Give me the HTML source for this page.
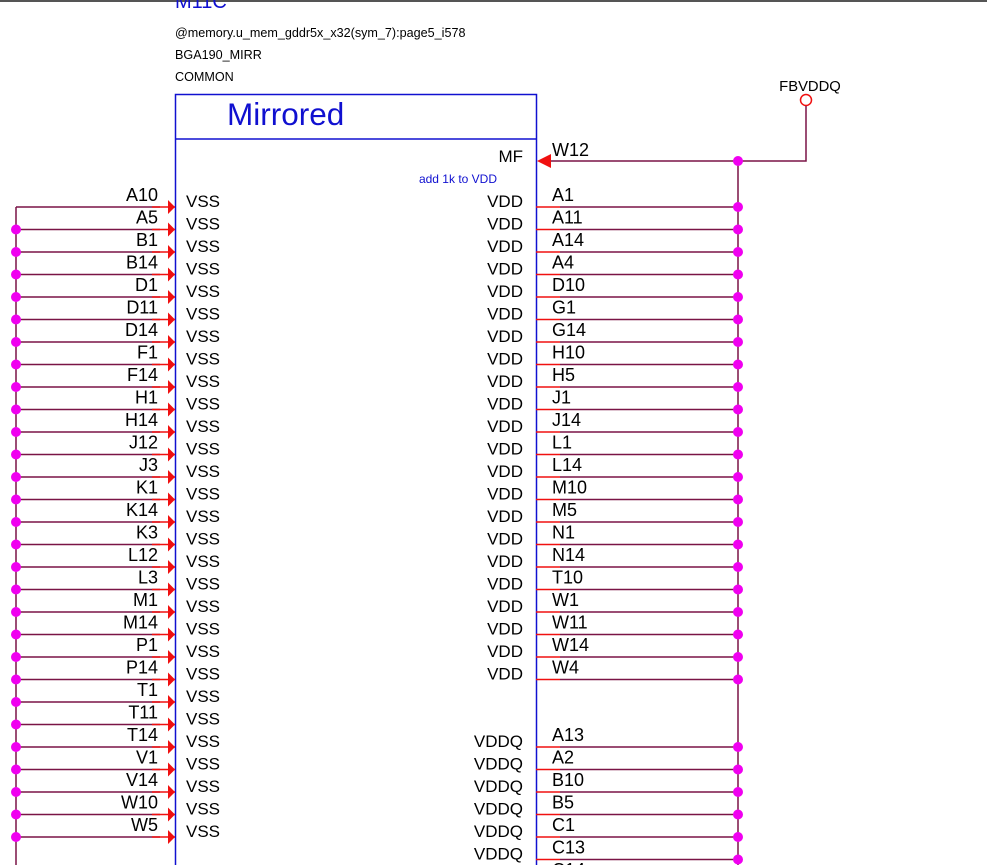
<!DOCTYPE html>
<html><head><meta charset="utf-8"><style>
html,body{margin:0;padding:0;background:#fff;width:987px;height:865px;overflow:hidden}
svg{display:block}
text{font-family:"Liberation Sans",sans-serif}
.l{font-size:18px;fill:#000;text-anchor:end}
.r{font-size:18px;fill:#000}
.v{font-size:17px;fill:#000}
.vr{font-size:17px;fill:#000;text-anchor:end}
.w{stroke:#7a1446;stroke-width:1.5;fill:none}
.red{stroke:#f01010;stroke-width:1.5}
.d{fill:#f000f0}
.a{fill:#f01010}
</style></head><body>
<svg width="987" height="865" viewBox="0 0 987 865">
<rect x="0" y="0" width="987" height="2" fill="#555"/>
<text x="175" y="8" font-size="20" fill="#1010d0">M11C</text>
<text x="175" y="37" font-size="12.6">@memory.u_mem_gddr5x_x32(sym_7):page5_i578</text>
<text x="175" y="59" font-size="12.6">BGA190_MIRR</text>
<text x="175" y="81" font-size="12.6">COMMON</text>
<rect x="175.5" y="94.5" width="361" height="790" fill="none" stroke="#1010d0" stroke-width="1.5"/>
<line x1="175" y1="139" x2="536" y2="139" stroke="#1010d0" stroke-width="1.5"/>
<text x="227" y="125" font-size="31.5" fill="#1010d0">Mirrored</text>
<text x="523" y="162" class="vr">MF</text>
<text x="497" y="183" font-size="12" fill="#1010d0" text-anchor="end">add 1k to VDD</text>
<text x="810" y="91" font-size="14.8" text-anchor="middle">FBVDDQ</text>
<circle cx="806" cy="100" r="5.5" fill="#fff" stroke="#f01010" stroke-width="1.5"/>
<polyline class="w" points="806,106 806,161 550,161"/>
<polygon class="a" points="537,161 551,154 551,168"/>
<text x="552" y="156" class="r">W12</text>
<line class="w" x1="738" y1="161" x2="738" y2="865"/>
<circle class="d" cx="738" cy="161" r="5"/>
<line class="w" x1="16" y1="207" x2="16" y2="865"/>

<g id="L">
<path class="w" d="M16 207H160M16 229.5H160M16 252H160M16 274.5H160M16 297H160M16 319.5H160M16 342H160M16 364.5H160M16 387H160M16 409.5H160M16 432H160M16 454.5H160M16 477H160M16 499.5H160M16 522H160M16 544.5H160M16 567H160M16 589.5H160M16 612H160M16 634.5H160M16 657H160M16 679.5H160M16 702H160M16 724.5H160M16 747H160M16 769.5H160M16 792H160M16 814.5H160M16 837H160"/>
<path class="red" d="M152 207H175M152 229.5H175M152 252H175M152 274.5H175M152 297H175M152 319.5H175M152 342H175M152 364.5H175M152 387H175M152 409.5H175M152 432H175M152 454.5H175M152 477H175M152 499.5H175M152 522H175M152 544.5H175M152 567H175M152 589.5H175M152 612H175M152 634.5H175M152 657H175M152 679.5H175M152 702H175M152 724.5H175M152 747H175M152 769.5H175M152 792H175M152 814.5H175M152 837H175"/>
<path class="a" d="M168 200l7 7-7 7zM168 222.5l7 7-7 7zM168 245l7 7-7 7zM168 267.5l7 7-7 7zM168 290l7 7-7 7zM168 312.5l7 7-7 7zM168 335l7 7-7 7zM168 357.5l7 7-7 7zM168 380l7 7-7 7zM168 402.5l7 7-7 7zM168 425l7 7-7 7zM168 447.5l7 7-7 7zM168 470l7 7-7 7zM168 492.5l7 7-7 7zM168 515l7 7-7 7zM168 537.5l7 7-7 7zM168 560l7 7-7 7zM168 582.5l7 7-7 7zM168 605l7 7-7 7zM168 627.5l7 7-7 7zM168 650l7 7-7 7zM168 672.5l7 7-7 7zM168 695l7 7-7 7zM168 717.5l7 7-7 7zM168 740l7 7-7 7zM168 762.5l7 7-7 7zM168 785l7 7-7 7zM168 807.5l7 7-7 7zM168 830l7 7-7 7z"/>
<g class="d">
<circle cx="16" cy="229.5" r="5"/><circle cx="16" cy="252" r="5"/><circle cx="16" cy="274.5" r="5"/><circle cx="16" cy="297" r="5"/><circle cx="16" cy="319.5" r="5"/><circle cx="16" cy="342" r="5"/><circle cx="16" cy="364.5" r="5"/><circle cx="16" cy="387" r="5"/><circle cx="16" cy="409.5" r="5"/><circle cx="16" cy="432" r="5"/><circle cx="16" cy="454.5" r="5"/><circle cx="16" cy="477" r="5"/><circle cx="16" cy="499.5" r="5"/><circle cx="16" cy="522" r="5"/><circle cx="16" cy="544.5" r="5"/><circle cx="16" cy="567" r="5"/><circle cx="16" cy="589.5" r="5"/><circle cx="16" cy="612" r="5"/><circle cx="16" cy="634.5" r="5"/><circle cx="16" cy="657" r="5"/><circle cx="16" cy="679.5" r="5"/><circle cx="16" cy="702" r="5"/><circle cx="16" cy="724.5" r="5"/><circle cx="16" cy="747" r="5"/><circle cx="16" cy="769.5" r="5"/><circle cx="16" cy="792" r="5"/><circle cx="16" cy="814.5" r="5"/><circle cx="16" cy="837" r="5"/>
</g>
<text class="l" x="158" y="201">A10</text><text class="l" x="158" y="223.5">A5</text><text class="l" x="158" y="246">B1</text><text class="l" x="158" y="268.5">B14</text><text class="l" x="158" y="291">D1</text><text class="l" x="158" y="313.5">D11</text><text class="l" x="158" y="336">D14</text><text class="l" x="158" y="358.5">F1</text><text class="l" x="158" y="381">F14</text><text class="l" x="158" y="403.5">H1</text><text class="l" x="158" y="426">H14</text><text class="l" x="158" y="448.5">J12</text><text class="l" x="158" y="471">J3</text><text class="l" x="158" y="493.5">K1</text><text class="l" x="158" y="516">K14</text><text class="l" x="158" y="538.5">K3</text><text class="l" x="158" y="561">L12</text><text class="l" x="158" y="583.5">L3</text><text class="l" x="158" y="606">M1</text><text class="l" x="158" y="628.5">M14</text><text class="l" x="158" y="651">P1</text><text class="l" x="158" y="673.5">P14</text><text class="l" x="158" y="696">T1</text><text class="l" x="158" y="718.5">T11</text><text class="l" x="158" y="741">T14</text><text class="l" x="158" y="763.5">V1</text><text class="l" x="158" y="786">V14</text><text class="l" x="158" y="808.5">W10</text><text class="l" x="158" y="831">W5</text>
<text class="v" x="186" y="207">VSS</text><text class="v" x="186" y="229.5">VSS</text><text class="v" x="186" y="252">VSS</text><text class="v" x="186" y="274.5">VSS</text><text class="v" x="186" y="297">VSS</text><text class="v" x="186" y="319.5">VSS</text><text class="v" x="186" y="342">VSS</text><text class="v" x="186" y="364.5">VSS</text><text class="v" x="186" y="387">VSS</text><text class="v" x="186" y="409.5">VSS</text><text class="v" x="186" y="432">VSS</text><text class="v" x="186" y="454.5">VSS</text><text class="v" x="186" y="477">VSS</text><text class="v" x="186" y="499.5">VSS</text><text class="v" x="186" y="522">VSS</text><text class="v" x="186" y="544.5">VSS</text><text class="v" x="186" y="567">VSS</text><text class="v" x="186" y="589.5">VSS</text><text class="v" x="186" y="612">VSS</text><text class="v" x="186" y="634.5">VSS</text><text class="v" x="186" y="657">VSS</text><text class="v" x="186" y="679.5">VSS</text><text class="v" x="186" y="702">VSS</text><text class="v" x="186" y="724.5">VSS</text><text class="v" x="186" y="747">VSS</text><text class="v" x="186" y="769.5">VSS</text><text class="v" x="186" y="792">VSS</text><text class="v" x="186" y="814.5">VSS</text><text class="v" x="186" y="837">VSS</text>
</g>

<path class="w" d="M560 207H738M560 229.5H738M560 252H738M560 274.5H738M560 297H738M560 319.5H738M560 342H738M560 364.5H738M560 387H738M560 409.5H738M560 432H738M560 454.5H738M560 477H738M560 499.5H738M560 522H738M560 544.5H738M560 567H738M560 589.5H738M560 612H738M560 634.5H738M560 657H738M560 679.5H738M560 747H738M560 769.5H738M560 792H738M560 814.5H738M560 837H738M560 859.5H738"/>
<path class="red" d="M536 207H560M536 229.5H560M536 252H560M536 274.5H560M536 297H560M536 319.5H560M536 342H560M536 364.5H560M536 387H560M536 409.5H560M536 432H560M536 454.5H560M536 477H560M536 499.5H560M536 522H560M536 544.5H560M536 567H560M536 589.5H560M536 612H560M536 634.5H560M536 657H560M536 679.5H560M536 747H560M536 769.5H560M536 792H560M536 814.5H560M536 837H560M536 859.5H560"/>
<g class="d">
<circle cx="738" cy="207" r="5"/><circle cx="738" cy="229.5" r="5"/><circle cx="738" cy="252" r="5"/><circle cx="738" cy="274.5" r="5"/><circle cx="738" cy="297" r="5"/><circle cx="738" cy="319.5" r="5"/><circle cx="738" cy="342" r="5"/><circle cx="738" cy="364.5" r="5"/><circle cx="738" cy="387" r="5"/><circle cx="738" cy="409.5" r="5"/><circle cx="738" cy="432" r="5"/><circle cx="738" cy="454.5" r="5"/><circle cx="738" cy="477" r="5"/><circle cx="738" cy="499.5" r="5"/><circle cx="738" cy="522" r="5"/><circle cx="738" cy="544.5" r="5"/><circle cx="738" cy="567" r="5"/><circle cx="738" cy="589.5" r="5"/><circle cx="738" cy="612" r="5"/><circle cx="738" cy="634.5" r="5"/><circle cx="738" cy="657" r="5"/><circle cx="738" cy="679.5" r="5"/><circle cx="738" cy="747" r="5"/><circle cx="738" cy="769.5" r="5"/><circle cx="738" cy="792" r="5"/><circle cx="738" cy="814.5" r="5"/><circle cx="738" cy="837" r="5"/><circle cx="738" cy="859.5" r="5"/>
</g>
<text class="r" x="552" y="201">A1</text><text class="r" x="552" y="223.5">A11</text><text class="r" x="552" y="246">A14</text><text class="r" x="552" y="268.5">A4</text><text class="r" x="552" y="291">D10</text><text class="r" x="552" y="313.5">G1</text><text class="r" x="552" y="336">G14</text><text class="r" x="552" y="358.5">H10</text><text class="r" x="552" y="381">H5</text><text class="r" x="552" y="403.5">J1</text><text class="r" x="552" y="426">J14</text><text class="r" x="552" y="448.5">L1</text><text class="r" x="552" y="471">L14</text><text class="r" x="552" y="493.5">M10</text><text class="r" x="552" y="516">M5</text><text class="r" x="552" y="538.5">N1</text><text class="r" x="552" y="561">N14</text><text class="r" x="552" y="583.5">T10</text><text class="r" x="552" y="606">W1</text><text class="r" x="552" y="628.5">W11</text><text class="r" x="552" y="651">W14</text><text class="r" x="552" y="673.5">W4</text>
<text class="r" x="552" y="741">A13</text><text class="r" x="552" y="763.5">A2</text><text class="r" x="552" y="786">B10</text><text class="r" x="552" y="808.5">B5</text><text class="r" x="552" y="831">C1</text><text class="r" x="552" y="853.5">C13</text><text class="r" x="552" y="876">C14</text>
<text class="vr" x="523" y="207">VDD</text><text class="vr" x="523" y="229.5">VDD</text><text class="vr" x="523" y="252">VDD</text><text class="vr" x="523" y="274.5">VDD</text><text class="vr" x="523" y="297">VDD</text><text class="vr" x="523" y="319.5">VDD</text><text class="vr" x="523" y="342">VDD</text><text class="vr" x="523" y="364.5">VDD</text><text class="vr" x="523" y="387">VDD</text><text class="vr" x="523" y="409.5">VDD</text><text class="vr" x="523" y="432">VDD</text><text class="vr" x="523" y="454.5">VDD</text><text class="vr" x="523" y="477">VDD</text><text class="vr" x="523" y="499.5">VDD</text><text class="vr" x="523" y="522">VDD</text><text class="vr" x="523" y="544.5">VDD</text><text class="vr" x="523" y="567">VDD</text><text class="vr" x="523" y="589.5">VDD</text><text class="vr" x="523" y="612">VDD</text><text class="vr" x="523" y="634.5">VDD</text><text class="vr" x="523" y="657">VDD</text><text class="vr" x="523" y="679.5">VDD</text>
<text class="vr" x="523" y="747">VDDQ</text><text class="vr" x="523" y="769.5">VDDQ</text><text class="vr" x="523" y="792">VDDQ</text><text class="vr" x="523" y="814.5">VDDQ</text><text class="vr" x="523" y="837">VDDQ</text><text class="vr" x="523" y="859.5">VDDQ</text>
</svg>
</body></html>
